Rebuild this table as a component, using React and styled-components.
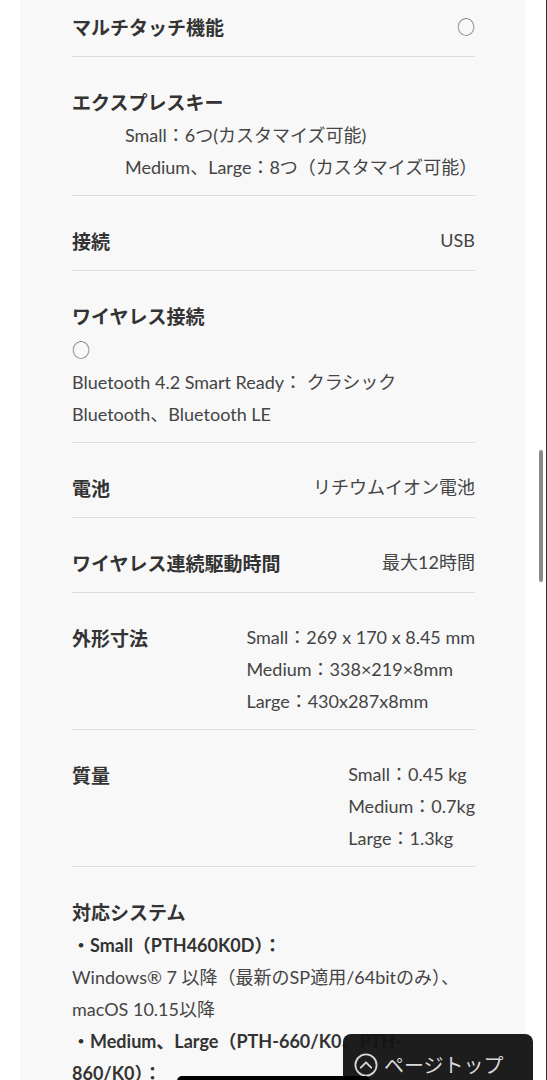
import React from "react";
import styled, { createGlobalStyle, css } from "styled-components";

const GlobalStyle = createGlobalStyle`
  html, body {
    margin: 0;
    padding: 0;
    background: #ffffff;
  }
  body {
    font-family: Lato, "Noto Sans CJK JP", "Noto Sans", sans-serif;
    -webkit-font-smoothing: antialiased;
  }
`;

const Screen = styled.div`
  position: relative;
  width: 547px;
  height: 1080px;
  overflow: hidden;
  background: #ffffff;
  border-right: 1px solid #333333;
  box-sizing: border-box;
`;

const Panel = styled.section`
  width: 506px;
  margin: -18px 0 0 20px;
  padding: 0 51px 0 52px;
  box-sizing: border-box;
  background: #f8f8f8;
  min-height: 1200px;
`;

const Row = styled.div`
  display: flex;
  justify-content: space-between;
  align-items: flex-start;
  padding: 28px 0 12px;
  border-bottom: 1px solid #dddddd;
  ${(p) =>
    p.$stack &&
    css`
      flex-direction: column;
      align-items: stretch;
    `}
  ${(p) =>
    p.$last &&
    css`
      border-bottom: none;
    `}
`;

const Label = styled.h3`
  margin: 0;
  font-family: "Noto Sans CJK JP", sans-serif;
  font-size: 19px;
  font-weight: 700;
  line-height: 34px;
  color: #333333;
  white-space: nowrap;
`;

const ValueBlock = styled.div`
  font-size: 18px;
  line-height: 32px;
  color: #444444;
  text-align: left;
  padding-left: ${(p) => (p.$indent ? "53px" : "0")};
`;

const Line = styled.div`
  white-space: nowrap;
  font-weight: ${(p) => (p.$bold ? 700 : 400)};
  color: ${(p) => (p.$bold ? "#333333" : "#444444")};
`;

const Mark = styled.span`
  display: inline-block;
  font-family: "Noto Sans CJK JP", sans-serif;
  font-size: 18px;
  line-height: 32px;
  color: #6e6e6e;
`;

const PageTop = styled.button`
  position: absolute;
  left: 343px;
  top: 1034px;
  width: 190px;
  height: 70px;
  border: none;
  border-radius: 8px;
  background: rgba(20, 20, 20, 0.96);
  color: #d9d9d9;
  display: flex;
  align-items: flex-start;
  gap: 6px;
  padding: 19px 0 0 11px;
  box-sizing: border-box;
  font-family: "Noto Sans CJK JP", sans-serif;
  font-size: 20px;
  line-height: 24px;
  cursor: pointer;
`;

const HomeBar = styled.div`
  position: absolute;
  left: 177px;
  top: 1076px;
  width: 193px;
  height: 10px;
  border-radius: 5px;
  background: #000000;
`;

const ScrollThumb = styled.div`
  position: absolute;
  left: 539px;
  top: 450px;
  width: 4px;
  height: 132px;
  border-radius: 2px;
  background: #8a8a8a;
`;

const ChevronCircle = () => (
  <svg width="24" height="24" viewBox="0 0 24 24" fill="none">
    <circle cx="12" cy="12" r="10.6" stroke="#d4d4d4" strokeWidth="1.8" />
    <path d="M6.8 14.6 L12 9.4 L17.2 14.6" stroke="#d4d4d4" strokeWidth="2" strokeLinecap="round" strokeLinejoin="round" />
  </svg>
);

export default function App() {
  return (
    <>
      <GlobalStyle />
      <Screen>
        <Panel>
          <Row>
            <Label>マルチタッチ機能</Label>
            <Mark>○</Mark>
          </Row>

          <Row $stack>
            <Label>エクスプレスキー</Label>
            <ValueBlock $indent>
              <Line>Small：6つ(カスタマイズ可能)</Line>
              <Line>Medium、Large：8つ（カスタマイズ可能）</Line>
            </ValueBlock>
          </Row>

          <Row>
            <Label>接続</Label>
            <ValueBlock>
              <Line>USB</Line>
            </ValueBlock>
          </Row>

          <Row $stack>
            <Label>ワイヤレス接続</Label>
            <ValueBlock>
              <Line>
                <Mark>○</Mark>
              </Line>
              <Line>Bluetooth 4.2 Smart Ready： クラシック</Line>
              <Line>Bluetooth、Bluetooth LE</Line>
            </ValueBlock>
          </Row>

          <Row>
            <Label>電池</Label>
            <ValueBlock>
              <Line>リチウムイオン電池</Line>
            </ValueBlock>
          </Row>

          <Row>
            <Label>ワイヤレス連続駆動時間</Label>
            <ValueBlock>
              <Line>最大12時間</Line>
            </ValueBlock>
          </Row>

          <Row>
            <Label>外形寸法</Label>
            <ValueBlock>
              <Line>Small：269 x 170 x 8.45 mm</Line>
              <Line>Medium：338×219×8mm</Line>
              <Line>Large：430x287x8mm</Line>
            </ValueBlock>
          </Row>

          <Row>
            <Label>質量</Label>
            <ValueBlock>
              <Line>Small：0.45 kg</Line>
              <Line>Medium：0.7kg</Line>
              <Line>Large：1.3kg</Line>
            </ValueBlock>
          </Row>

          <Row $stack $last>
            <Label>対応システム</Label>
            <ValueBlock>
              <Line $bold>・Small（PTH460K0D）：</Line>
              <Line>Windows® 7 以降（最新のSP適用/64bitのみ）、</Line>
              <Line>macOS 10.15以降</Line>
              <Line $bold>・Medium、Large（PTH-660/K0、PTH-</Line>
              <Line $bold>860/K0）：</Line>
            </ValueBlock>
          </Row>
        </Panel>

        <PageTop type="button">
          <ChevronCircle />
          <span>ページトップ</span>
        </PageTop>
        <HomeBar />
        <ScrollThumb />
      </Screen>
    </>
  );
}
